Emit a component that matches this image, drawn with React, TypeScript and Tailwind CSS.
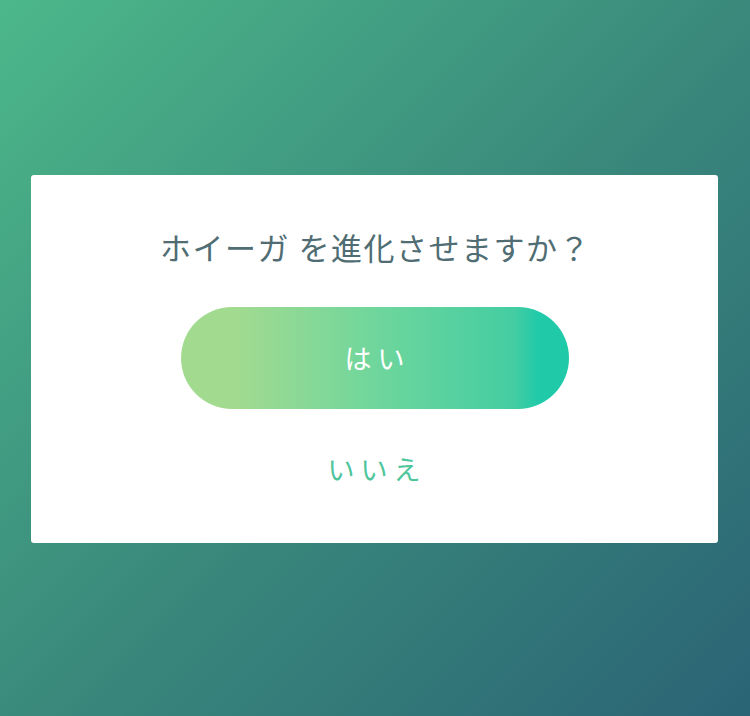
export default function App() {
  return (
    <div className="flex h-[716px] w-[750px] flex-col bg-[linear-gradient(135deg,#4cb88a_0%,#3a8a7c_50%,#2a6475_100%)] font-['Noto_Sans_CJK_JP','Noto_Sans',sans-serif]">
      <div className="mx-[31px] mt-[175px] flex h-[368px] w-[687px] flex-col items-center rounded-[3px] bg-white">
        <h1 className="mt-[52px] pl-[2px] text-[31px] font-normal leading-[40px] tracking-[1.5px] text-[#4f6d73]">
          ホイーガ を進化させますか？
        </h1>
        <button className="mt-[40px] flex h-[102px] w-[388px] items-center justify-center rounded-full bg-[linear-gradient(90deg,#a2da90_0%,#a2da90_14%,#6fd69c_50%,#44cda2_86%,#20caa9_92%)] pl-[6px] text-[27px] font-normal tracking-[6px] text-white">
          はい
        </button>
        <button className="mt-[40px] pl-[5px] text-[27px] font-normal tracking-[6px] text-[#4dc59b]">
          いいえ
        </button>
      </div>
    </div>
  );
}
